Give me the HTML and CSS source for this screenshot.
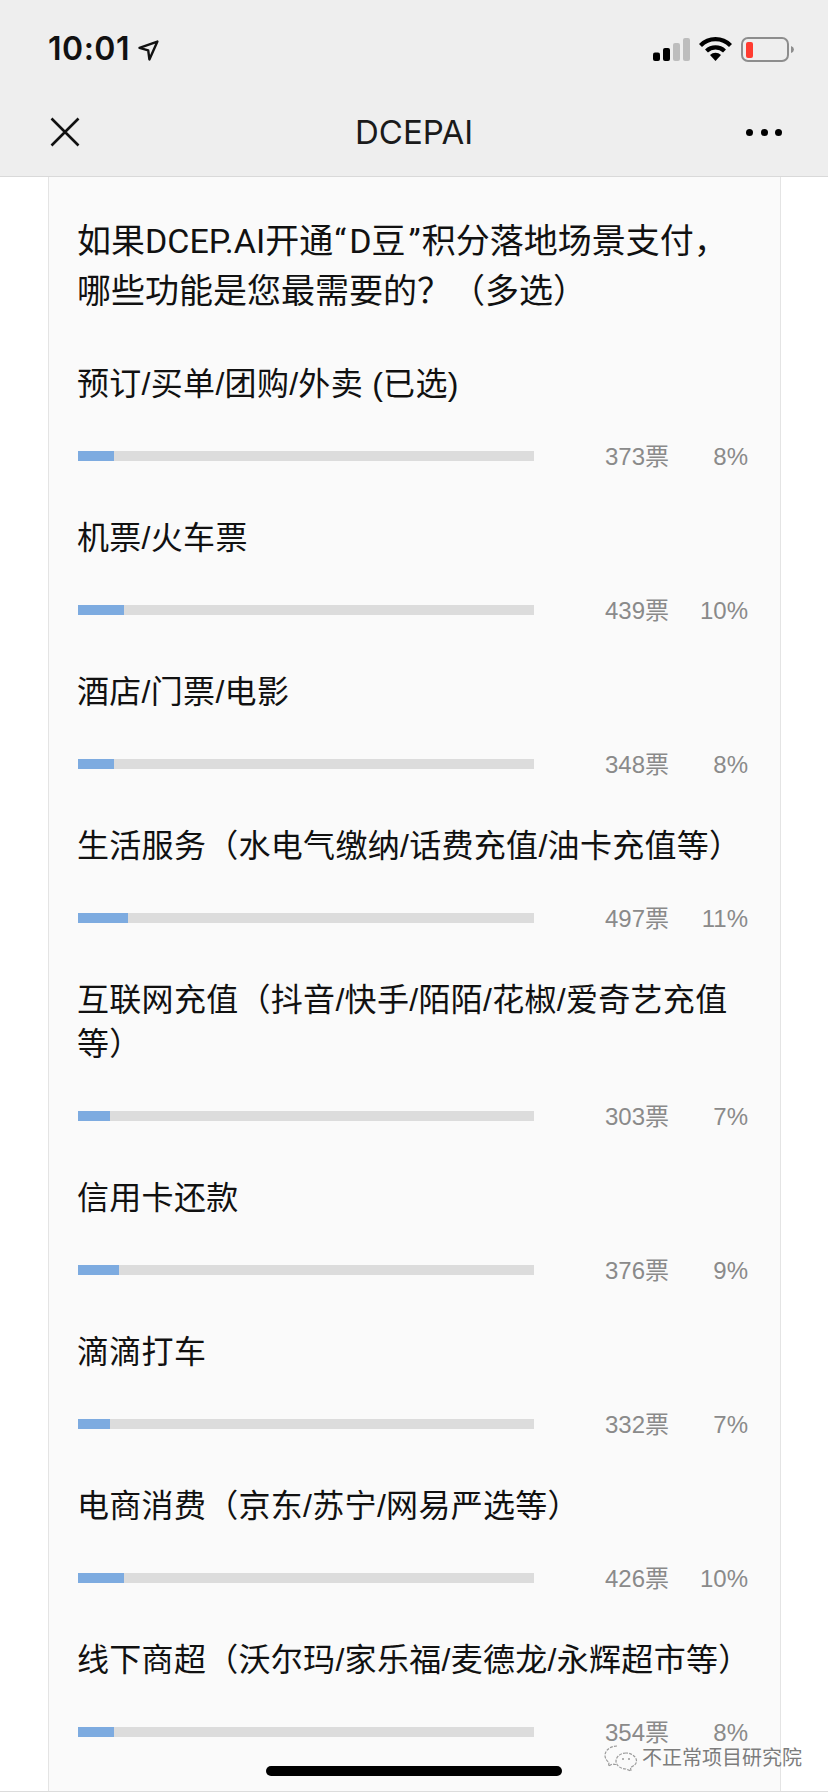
FILE: index.html
```html
<!DOCTYPE html>
<html lang="zh-CN">
<head>
<meta charset="utf-8">
<title>DCEPAI</title>
<link rel="stylesheet" href="styles.css">
</head>
<body>
<div class="phone">
  <header class="chrome">
    <div class="status">
      <div class="status-left">
        <span class="time">10:01</span>
        <svg class="loc" width="21" height="21" viewBox="0 0 21 21"><path d="M1.500 7.800 L19.400 1.600 L11.400 19.400 L10.200 10.300 Z" fill="none" stroke="#111" stroke-width="2.400" stroke-linejoin="round"/></svg>
      </div>
      <div class="status-right">
        <svg class="signal" width="37" height="23" viewBox="0 0 37 23"><rect x="0" y="14.500" width="7" height="8.500" rx="2" fill="#000"/><rect x="10" y="10" width="7" height="13" rx="2" fill="#000"/><rect x="20" y="5" width="7" height="18" rx="2" fill="#bdbdbd"/><rect x="30" y="0" width="7" height="23" rx="2" fill="#bdbdbd"/></svg>
        <svg class="wifi" width="33" height="24" viewBox="0 0 33 24"><path d="M1.500 8.500 A21 21 0 0 1 31.500 8.500" fill="none" stroke="#000" stroke-width="4.200"/><path d="M7.500 14 A13 13 0 0 1 25.500 14" fill="none" stroke="#000" stroke-width="4.200"/><path d="M11 18 L16.500 24 L22 18 A8 8 0 0 0 11 18 Z" fill="#000"/></svg>
        <svg class="battery" width="53" height="25" viewBox="0 0 53 25"><rect x="1" y="1" width="46" height="23" rx="6" fill="none" stroke="#8d8d8d" stroke-width="2"/><rect x="5" y="5" width="7" height="16" rx="2" fill="#ff3b30"/><path d="M50 9 A4 4 0 0 1 53 12.500 A4 4 0 0 1 50 16 Z" fill="#8d8d8d"/></svg>
      </div>
    </div>
    <div class="navbar">
      <svg class="close" width="30" height="30" viewBox="0 0 30 30"><path d="M1.500 1.500 L28.500 28.500 M28.500 1.500 L1.500 28.500" stroke="#111" stroke-width="2.600" fill="none"/></svg>
      <div class="nav-title">DCEPAI</div>
      <div class="more"><i></i><i></i><i></i></div>
    </div>
  </header>
  <main class="page">
    <section class="card">
      <h1 class="question">如果DCEP.AI开通<span class="qm-open">“</span>D豆<span class="qm-close">”</span>积分落地场景支付，<br>哪些功能是您最需要的？（多选）</h1>
      <div class="option"><div class="label">预订/买单/团购/外卖 (已选)</div><div class="meter"><div class="track"><div class="fill" style="width:8%"></div></div><span class="votes">373票</span><span class="pct">8%</span></div></div>
      <div class="option"><div class="label">机票/火车票</div><div class="meter"><div class="track"><div class="fill" style="width:10%"></div></div><span class="votes">439票</span><span class="pct">10%</span></div></div>
      <div class="option"><div class="label">酒店/门票/电影</div><div class="meter"><div class="track"><div class="fill" style="width:8%"></div></div><span class="votes">348票</span><span class="pct">8%</span></div></div>
      <div class="option"><div class="label">生活服务（水电气缴纳/话费充值/油卡充值等）</div><div class="meter"><div class="track"><div class="fill" style="width:11%"></div></div><span class="votes">497票</span><span class="pct">11%</span></div></div>
      <div class="option"><div class="label">互联网充值（抖音/快手/陌陌/花椒/爱奇艺充值等）</div><div class="meter"><div class="track"><div class="fill" style="width:7%"></div></div><span class="votes">303票</span><span class="pct">7%</span></div></div>
      <div class="option"><div class="label">信用卡还款</div><div class="meter"><div class="track"><div class="fill" style="width:9%"></div></div><span class="votes">376票</span><span class="pct">9%</span></div></div>
      <div class="option"><div class="label">滴滴打车</div><div class="meter"><div class="track"><div class="fill" style="width:7%"></div></div><span class="votes">332票</span><span class="pct">7%</span></div></div>
      <div class="option"><div class="label">电商消费（京东/苏宁/网易严选等）</div><div class="meter"><div class="track"><div class="fill" style="width:10%"></div></div><span class="votes">426票</span><span class="pct">10%</span></div></div>
      <div class="option"><div class="label">线下商超（沃尔玛/家乐福/麦德龙/永辉超市等）</div><div class="meter"><div class="track"><div class="fill" style="width:8%"></div></div><span class="votes">354票</span><span class="pct">8%</span></div></div>
    </section>
  </main>
  <div class="watermark">
    <svg width="34" height="28" viewBox="0 0 34 28"><g fill="none" stroke="#9a9a9a" stroke-width="1.200" stroke-dasharray="3 1.200"><path d="M13 2 C6 2 1 6.500 1 11.500 C1 14.500 3 17 5 18.500 L4.500 22 L8.500 20 C10 20.500 11 20.500 12 20.500"/><path d="M22 9 C16.500 9 12 12.700 12 17 C12 21.300 16.500 25 22 25 L27 27 L26.500 23.500 C30 22 32.500 19.800 32.500 17 C32.500 12.700 27.500 9 22 9 Z"/></g><circle cx="19" cy="15" r="1" fill="#9a9a9a"/><circle cx="25" cy="15" r="1" fill="#9a9a9a"/></svg>
    <span>不正常项目研究院</span>
  </div>
  <div class="home"></div>
</div>
</body>
</html>
```

FILE: styles.css
```css
* { box-sizing: border-box; }
html, body { margin: 0; padding: 0; background: #fff; }
body { font-family: "Liberation Sans", "Noto Sans CJK SC", sans-serif; color: #111; }
.phone { position: relative; width: 828px; height: 1792px; overflow: hidden; display: flex; flex-direction: column; border-bottom: 1px solid #dcdcdc; }
.chrome { height: 177px; flex: none; background: #eeeeee; border-bottom: 1px solid #d9d9d9; }
.status { height: 96px; padding: 0 34px 0 48px; display: flex; justify-content: space-between; align-items: flex-start; }
.status-left { display: flex; align-items: center; gap: 8px; margin-top: 30px; }
.time { font-family: Inter, sans-serif; font-weight: 600; font-size: 32px; line-height: 38px; letter-spacing: .5px; }
.loc { margin-top: 2px; }
.status-right { display: flex; align-items: flex-start; margin-top: 37px; }
.signal { margin: 1px 9px 0 0; }
.wifi { margin-right: 9px; }
.navbar { height: 80px; padding: 0 46px 8px 50px; display: flex; align-items: center; justify-content: space-between; position: relative; }
.nav-title { position: absolute; left: 0; right: 0; text-align: center; font-family: Inter, sans-serif; font-size: 33px; color: #1a1a1a; top: 17px; line-height: 38px; }
.more { display: flex; gap: 7.500px; }
.more i { display: block; width: 7px; height: 7px; border-radius: 50%; background: #000; }
.page { flex: 1; min-height: 0; }
.card { width: 733px; height: 100%; margin-left: 48px; background: #fafafa; border: 1px solid #e4e4e4; border-width: 0 1px; padding: 39px 32px 0 29px; }
.question { margin: 0 0 46px -1px; font-family: Roboto, "Noto Sans CJK SC", sans-serif; font-weight: 400; font-size: 34px; line-height: 50px; color: #111; white-space: nowrap; }
.qm-open { margin-left: 1px; margin-right: 3px; }
.qm-close { margin-left: 3px; margin-right: 1px; }
.option { margin-bottom: 46px; }
.label { font-size: 32px; line-height: 44px; width: 660px; margin-left: -1px; color: #111; letter-spacing: .3px; }
.meter { display: flex; align-items: center; margin-top: 36px; height: 28px; }
.track { width: 456px; height: 10px; background: #dcdcdc; flex: none; }
.fill { height: 100%; background: #7dabe0; }
.votes { margin-left: 71px; width: 64px; padding-top: 2px; font-size: 24px; line-height: 28px; color: #8a8a8a; white-space: nowrap; }
.pct { width: 80px; padding-top: 2px; text-align: right; font-size: 24px; line-height: 28px; color: #8a8a8a; }
.watermark { position: absolute; left: 604px; top: 1744px; display: flex; align-items: center; gap: 4px; font-size: 20px; line-height: 28px; color: #7c7c7c; text-shadow: 0 0 2px #fff; }
.home { position: absolute; left: 266px; top: 1766px; width: 296px; height: 10px; border-radius: 5px; background: #000; }
```
